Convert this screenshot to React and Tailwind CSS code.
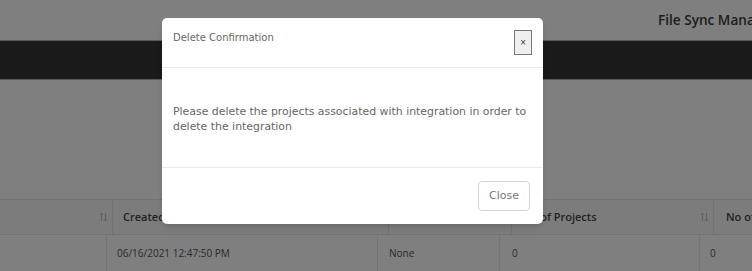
import React from 'react';

const font = { fontFamily: '"DejaVu Sans", sans-serif' };
const open = { fontFamily: '"Open Sans", sans-serif' };

function SortIcon() {
  return (
    <svg width="9" height="10" viewBox="0 0 9 10" className="text-[#bbb]">
      <path d="M2.5 9V1M0.8 2.8L2.5 1l1.7 1.8M6.5 1v8M4.8 7.2L6.5 9l1.7-1.8" stroke="currentColor" strokeWidth="0.9" fill="none" />
    </svg>
  );
}

function App() {
  return (
    <div className="relative w-[752px] h-[271px] overflow-hidden bg-white" style={font}>
      <div className="h-[40px] flex items-center pl-[658px] whitespace-nowrap" style={open}>
        <span className="text-[13.6px] font-semibold text-[#3a3a3a]">File Sync Manager</span>
      </div>
      <div className="h-[40px] bg-[#343434] border-y border-[#b4b4b4]"></div>

      <div className="mt-[119px] text-[10px]" style={open}>
        <div className="flex h-[36px] bg-[#f9f9f9] border-y border-[#e4e4e4] font-semibold text-[11px] text-[#444] whitespace-nowrap">
          <div className="w-[113px] shrink-0 flex items-center justify-end pr-[4px] border-r border-[#e4e4e4]">
            <SortIcon />
          </div>
          <div className="w-[276px] shrink-0 flex items-center pl-[10px] border-r border-[#e4e4e4]">Created Date</div>
          <div className="w-[123px] shrink-0 flex items-center pl-[10px] border-r border-[#e4e4e4]">Status</div>
          <div className="w-[202px] shrink-0 flex items-center justify-between pl-[10px] pr-[4px] border-r border-[#e4e4e4]">
            <span>No of Projects</span>
            <SortIcon />
          </div>
          <div className="flex-1 flex items-center pl-[12px]">No of Files</div>
        </div>
        <div className="flex h-[36px] text-[#555] whitespace-nowrap">
          <div className="w-[107px] shrink-0 border-r border-[#e8e8e8]"></div>
          <div className="w-[271px] shrink-0 flex items-center pl-[10px] border-r border-[#e8e8e8]">06/16/2021 12:47:50 PM</div>
          <div className="w-[122px] shrink-0 flex items-center pl-[11px] border-r border-[#e8e8e8]">None</div>
          <div className="w-[200px] shrink-0 flex items-center pl-[12px] border-r border-[#e8e8e8]">0</div>
          <div className="flex-1 flex items-center pl-[10px]">0</div>
        </div>
      </div>

      <div className="absolute inset-0 bg-black/50">
        <div className="ml-[162px] mt-[18px] w-[381px] bg-white rounded-[5px] shadow-md">
          <div className="h-[50px] flex items-start justify-between pl-[11px] pr-[11px] pt-[13px] border-b border-[#e9e9e9]">
            <span className="text-[10px] text-[#666] leading-[14px]">Delete Confirmation</span>
            <button className="w-[18px] h-[25px] -mt-[1px] bg-[#efefef] border border-[#777] flex items-center justify-center text-[8px] text-[#333] leading-none">
              ×
            </button>
          </div>
          <div className="h-[100px] pl-[11px] pr-[11px] pt-[36px] text-[10.9px] leading-[15px] text-[#666] border-b border-[#e9e9e9]">
            Please delete the projects associated with integration in order to delete the integration
          </div>
          <div className="h-[56px] flex items-center justify-end pr-[13px]">
            <button className="w-[52px] h-[30px] rounded-[4px] border border-[#d4d4d4] bg-white text-[11px] text-[#777]">Close</button>
          </div>
        </div>
      </div>
    </div>
  );
}

export default App;
